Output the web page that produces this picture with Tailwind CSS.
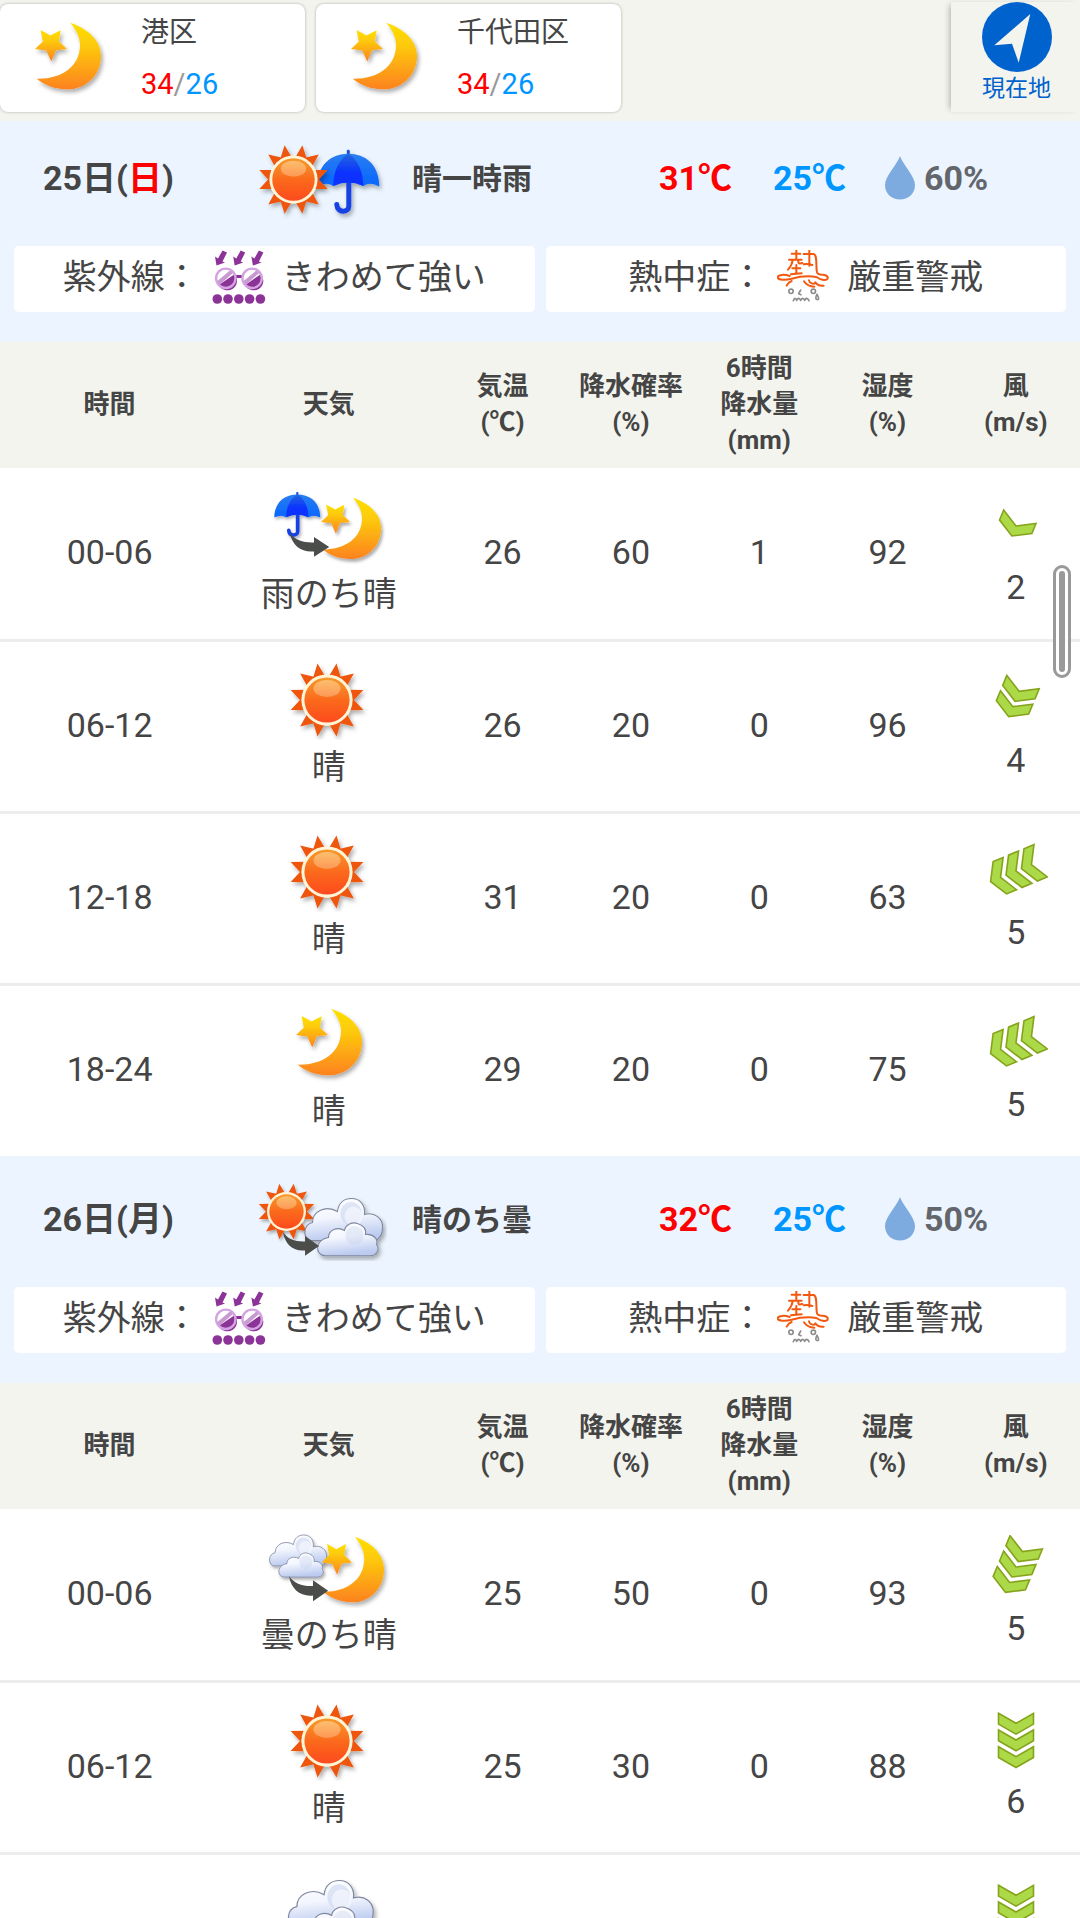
<!DOCTYPE html>
<html lang="ja">
<head>
    <meta charset="UTF-8">
    <meta name="viewport" content="width=device-width, initial-scale=1.0">
    <title>天気予報</title>
    <script src="https://cdn.jsdelivr.net/npm/@tailwindcss/browser@4"></script>
</head>
<body class="relative h-screen overflow-hidden bg-white font-[Roboto,'Noto_Sans_CJK_JP',sans-serif] text-[#454545]">

    <!-- Shared icon shapes -->
    <svg class="absolute w-0 h-0" aria-hidden="true">
        <defs>
            <linearGradient id="gold" x1="0" y1="0" x2="0" y2="1">
                <stop offset="0" stop-color="#fee000" />
                <stop offset="0.35" stop-color="#fdc90b" />
                <stop offset="1" stop-color="#fd8220" />
            </linearGradient>
            <linearGradient id="disc" x1="0" y1="0" x2="0" y2="1">
                <stop offset="0" stop-color="#f59a2c" />
                <stop offset="0.5" stop-color="#fb6a1d" />
                <stop offset="1" stop-color="#fd4a20" />
            </linearGradient>
            <linearGradient id="shine" x1="0" y1="0" x2="0" y2="1">
                <stop offset="0" stop-color="#ffd08a" stop-opacity="0.7" />
                <stop offset="1" stop-color="#ffb27a" stop-opacity="0.6" />
            </linearGradient>
            <linearGradient id="dome" x1="0" y1="0" x2="0" y2="1">
                <stop offset="0" stop-color="#2a7df0" />
                <stop offset="1" stop-color="#0566ff" />
            </linearGradient>
            <linearGradient id="panel" x1="0" y1="0" x2="0" y2="1">
                <stop offset="0" stop-color="#2467dc" />
                <stop offset="0.6" stop-color="#0a32ff" />
                <stop offset="1" stop-color="#0a32ff" />
            </linearGradient>
            <linearGradient id="puff" x1="0" y1="0" x2="0.2" y2="1">
                <stop offset="0" stop-color="#ffffff" />
                <stop offset="0.5" stop-color="#f3f6fe" />
                <stop offset="1" stop-color="#bccbef" />
            </linearGradient>
            <filter id="shadow" x="-20%" y="-20%" width="150%" height="150%">
                <feDropShadow dx="2" dy="3" stdDeviation="2" flood-color="#000" flood-opacity="0.32" />
            </filter>

            <g id="moon" filter="url(#shadow)">
                <path fill="url(#gold)" d="M68 4.7C84 10 99 21 99 38C99 57 84 71.3 66 71.3C53 71.3 42 67 34.7 60.7C57 61.5 78 50 78 27C78 18 73 10 68 4.7Z" />
                <path fill="url(#gold)" d="M38.6 12L48.4 17.4L58.6 12.2L56.9 23.4L65 31L54 32.2L49.3 43.4L44.2 32.4L33 31L40.8 23.4Z" />
            </g>

            <!-- centred on 0,0, rays reach 36.5 -->
            <g id="sun" filter="url(#shadow)">
                <g fill="#ee5510">
                    <path id="rays" d="M-14 -22L-9.5 -36.5L-1.5 -23ZM14 -22L9.5 -36.5L1.5 -23Z" />
                    <use href="#rays" transform="rotate(60)" />
                    <use href="#rays" transform="rotate(120)" />
                    <use href="#rays" transform="rotate(180)" />
                    <use href="#rays" transform="rotate(240)" />
                    <use href="#rays" transform="rotate(300)" />
                </g>
                <circle r="25.6" fill="#fff5d6" />
                <circle r="22.6" fill="url(#disc)" />
                <ellipse cy="-11.5" rx="13.5" ry="8.5" fill="url(#shine)" />
            </g>

            <g id="umbrella" filter="url(#shadow)">
                <path d="M0.500 30V54C0.500 60.500 -11 61 -11.500 52.500" fill="none" stroke="#1742e4" stroke-width="5" stroke-linecap="round" />
                <path d="M-1.500 5V1C-1.500 -0.500 1.500 -0.500 1.500 1V5Z" fill="#1a56d8" />
                <path d="M-31 35C-31 14 -17 3.500 0 3.500C17 3.500 31 14 31 35Q22 30 15 34.500Q0 28 -15 34.500Q-22 30 -31 35Z" fill="url(#dome)" />
                <path d="M0 3.500C-9 9 -15 20 -15 34.500Q0 28 15 34.500C15 20 9 9 0 3.500Z" fill="url(#panel)" />
            </g>

            <g id="cloud" filter="url(#shadow)">
                <g stroke="#8088a0" stroke-width="1.1">
                    <path fill="url(#puff)" d="M6 42C-1 38 0 26 9 24C9 13 22 6 34 13C35 4 41 0 48 0C57 0 62 7 61 16C71 13 80 20 79 30C79 36 76 40 72 42Z" />
                </g>
                <ellipse cx="47.500" cy="15" rx="10.500" ry="11.500" fill="#c9d4ee" opacity="0.55" />
                <ellipse cx="50" cy="18" rx="9" ry="10" fill="#fff" opacity="0.5" />
                <path fill="url(#puff)" stroke="#8088a0" stroke-width="1.1" d="M22 57.300C11 57 11 41 25 39C25 31 34 28 41 32C42 26 49 23 54 25C60 27 63 31 62 36C70 35 75 41 73 46C77 51 73 57.300 66 57.300Z" />
                <ellipse cx="51" cy="37" rx="9" ry="9.500" fill="#c3cfec" opacity="0.35" />
            </g>

            <!-- tip of the arrow at 40,15 -->
            <path id="later" fill="#4b4d4b" d="M0 0C5 8 14 11 24.500 10.500V4.500L40 15.500L24.500 26.500V20.500C12 22 2 14 0 0Z" />

            <path id="gust" fill="#abd947" stroke="#86a31c" stroke-width="1.6" d="M-17.500 -10L0 0L17.500 -10V.8L0 10.800L-17.500 .8Z" />
            <g id="wind1"><use href="#gust" /></g>
            <g id="wind2"><use href="#gust" y="-8.300" /><use href="#gust" y="8.300" /></g>
            <g id="wind3"><use href="#gust" y="-16.700" /><use href="#gust" /><use href="#gust" y="16.700" /></g>

            <g id="uv">
                <g fill="#8b3397">
                    <path id="ray" d="M10.500 0.500L15 2.500L10.500 11.500L13 12.600L4.500 15.600L3 6.500L6 8.500Z" />
                    <use href="#ray" x="18.200" />
                    <use href="#ray" x="36.400" />
                    <circle cx="5.300" cy="49" r="4.800" />
                    <circle cx="16" cy="49" r="4.800" />
                    <circle cx="26.800" cy="49" r="4.800" />
                    <circle cx="37.600" cy="49" r="4.800" />
                    <circle cx="48.400" cy="49" r="4.800" />
                    <rect x="24" y="25" width="6" height="3" />
                </g>
                <g id="lens">
                    <circle cx="13.800" cy="28.300" r="9.600" fill="#fff" />
                    <path d="M22.500 24.200A9.600 9.600 0 1 1 6.800 34.900Z" fill="#8b3397" />
                    <path d="M4.800 31.500L18.500 20L21.500 22.500L7 35.200Z" fill="#c79bd0" />
                    <circle cx="13.800" cy="28.300" r="9.700" fill="none" stroke="#d3a3e2" stroke-width="2.400" />
                </g>
                <use href="#lens" x="26.300" />
            </g>

            <g id="heat" fill="none" stroke-linecap="round" stroke-linejoin="round">
                <g stroke="#f2590f" stroke-width="6">
                    <path d="M62 32H88M76 17V50M54 50H92M65 51C64 62 58 72 51 80M82 51V58C82 62 88 62 94 60" />
                    <path d="M64 76H88M76 66V92M60 94L92 91" />
                    <path d="M98 33H128C140 36 134 72 138 88C141 96 150 95 160 96C176 100 172 112 158 111C148 110 142 106 136 102C110 98 84 101 62 107C44 112 22 112 20 103C21 94 42 94 56 99" />
                    <path d="M115 17V68M98 64C106 62 112 62 124 66" />
                    <path d="M62 114C54 117 50 122 47 128M99 115C106 126 118 131 130 131M114 112C116 122 128 124 133 120M133 118C138 126 148 129 158 128" />
                </g>
                <g stroke="#8c8c8c" stroke-width="5">
                    <circle cx="60" cy="145" r="6.500" />
                    <circle cx="127" cy="145" r="6.500" />
                    <path d="M89 141L83 152L90 155M67 173C70 164 74 164 77 172C81 164 86 164 89 172C93 164 98 164 101 172C105 164 110 164 114 173M138 154C132 164 134 170 139 170C144 170 144 164 138 154" />
                </g>
            </g>
        </defs>
    </svg>

    <!-- Registered places -->
    <header class="flex items-start justify-between bg-[#f3f4ee] pt-1 pb-[9px]">
        <nav class="flex gap-[11px]">
            <a href="#" class="flex items-center w-[305px] h-[108px] bg-white rounded-lg shadow-[0_0_3px_rgba(0,0,0,0.3)]">
                <svg class="ml-7 size-20" viewBox="26 0 80 80"><use href="#moon" /></svg>
                <span class="ml-[33px] text-[28px] leading-[52px]">
                    <span class="block">港区</span>
                    <span class="block text-[29px] leading-[50px]"><span class="text-[#ff0000]">34</span><span class="text-[#999999]">/</span><span class="text-[#0096ff]">26</span></span>
                </span>
            </a>
            <a href="#" class="flex items-center w-[305px] h-[108px] bg-white rounded-lg shadow-[0_0_3px_rgba(0,0,0,0.3)]">
                <svg class="ml-7 size-20" viewBox="26 0 80 80"><use href="#moon" /></svg>
                <span class="ml-[33px] text-[28px] leading-[52px]">
                    <span class="block">千代田区</span>
                    <span class="block text-[29px] leading-[50px]"><span class="text-[#ff0000]">34</span><span class="text-[#999999]">/</span><span class="text-[#0096ff]">26</span></span>
                </span>
            </a>
        </nav>
        <button type="button" class="flex flex-col items-center -mt-0.5 pl-0.5 w-[129px] h-[110px] bg-[#f3f4ee] text-[#0062cc] shadow-[-4px_0_6px_-3px_rgba(0,0,0,0.3)]">
            <svg class="size-[70px] shrink-0" viewBox="0 0 70 70">
                <circle cx="35" cy="35" r="35" fill="#0062cc" />
                <path d="M48.300 12L12.300 43.300L30 41.700L36.700 60.700Z" fill="#f3f4ee" />
            </svg>
            <span class="text-[23px] leading-[34px]">現在地</span>
        </button>
    </header>

    <main>
        <!-- 25日 -->
        <section>
            <div class="bg-[#ecf5ff] px-[14px] pt-[19px] pb-[30px]">
                <div class="grid grid-cols-[212fr_404fr_114fr_112fr_181fr] items-center h-20 pl-[29px] text-[34px] font-bold">
                    <h2 class="pb-1">25日(<span class="text-[#ff0000]">日</span>)</h2>
                    <div class="flex items-center gap-[25px]">
                        <svg class="w-[132px] h-20" viewBox="0 0 132 80">
                            <use href="#umbrella" transform="translate(93.300 10) scale(1 1.040)" />
                            <use href="#sun" transform="translate(38.500 39.500) scale(.94)" />
                        </svg>
                        <span class="pb-1 text-[30px]">晴一時雨</span>
                    </div>
                    <span class="pb-1 text-[#ff0000]">31℃</span>
                    <span class="pb-1 text-[#0096ff]">25℃</span>
                    <span class="flex items-center gap-[9px] pb-1 text-[#63666b]">
                        <svg class="w-[30px] h-11" viewBox="0 0 30 44"><path d="M15 0C18 9 30 20 30 29C30 38 23 43.500 15 43.500C7 43.500 0 38 0 29C0 20 12 9 15 0Z" fill="#7eabdf" /></svg>
                        60%
                    </span>
                </div>
                <div class="grid grid-cols-2 gap-[11px] mt-[26px] text-[34px]">
                    <p class="flex items-center justify-center h-[66px] pb-[3px] bg-white rounded-[5px]">紫外線：<svg class="ml-[13px] mr-4 mb-0.5 size-[54px]" viewBox="0 0 54 54"><use href="#uv" /></svg>きわめて強い</p>
                    <p class="flex items-center justify-center h-[66px] pb-[3px] bg-white rounded-[5px]">熱中症：<svg class="ml-[13px] mr-4 mb-0.5 size-[54px]" viewBox="18 21 162 162"><use href="#heat" /></svg>厳重警戒</p>
                </div>
            </div>
            <table class="w-full table-fixed text-center text-[34px] leading-[51px]">
                <thead>
                    <tr class="h-[126px] bg-[#f3f4ee] text-[26px] leading-9">
                        <th class="w-[20.3%] pb-0.5">時間</th>
                        <th class="w-[20.3%] pb-0.5">天気</th>
                        <th class="pb-0.5">気温<br>(℃)</th>
                        <th class="pb-0.5">降水確率<br>(%)</th>
                        <th class="pb-0.5">6時間<br>降水量<br>(mm)</th>
                        <th class="pb-0.5">湿度<br>(%)</th>
                        <th class="pb-0.5">風<br>(m/s)</th>
                    </tr>
                </thead>
                <tbody>
                    <tr class="h-[172px] border-b-3 border-[#ededed]">
                        <td class="pb-0.5">00-06</td>
                        <td>
                            <svg class="mx-auto mb-0.5 w-[132px] h-20" viewBox="0 0 132 80">
                                <use href="#umbrella" transform="translate(34.300 5) scale(.74 .73)" />
                                <use href="#moon" transform="translate(28 6.500) scale(.91 .92)" />
                                <use href="#later" transform="translate(27 46) scale(.98 .9)" />
                            </svg>
                            雨のち晴
                        </td>
                        <td class="pb-0.5">26</td>
                        <td class="pb-0.5">60</td>
                        <td class="pb-0.5">1</td>
                        <td class="pb-0.5">92</td>
                        <td><svg class="mx-auto mb-1 size-16" viewBox="-32 -32 64 64"><use href="#wind1" transform="rotate(22.500)" /></svg>2</td>
                    </tr>
                    <tr class="h-[172px] border-b-3 border-[#ededed]">
                        <td class="pb-0.5">06-12</td>
                        <td>
                            <svg class="mx-auto mb-0.5 w-[132px] h-20" viewBox="0 0 132 80"><use href="#sun" transform="translate(64 40)" /></svg>
                            晴
                        </td>
                        <td class="pb-0.5">26</td>
                        <td class="pb-0.5">20</td>
                        <td class="pb-0.5">0</td>
                        <td class="pb-0.5">96</td>
                        <td><svg class="mx-auto mb-1 size-16" viewBox="-32 -32 64 64"><use href="#wind2" transform="rotate(22.500)" /></svg>4</td>
                    </tr>
                    <tr class="h-[172px] border-b-3 border-[#ededed]">
                        <td class="pb-0.5">12-18</td>
                        <td>
                            <svg class="mx-auto mb-0.5 w-[132px] h-20" viewBox="0 0 132 80"><use href="#sun" transform="translate(64 40)" /></svg>
                            晴
                        </td>
                        <td class="pb-0.5">31</td>
                        <td class="pb-0.5">20</td>
                        <td class="pb-0.5">0</td>
                        <td class="pb-0.5">63</td>
                        <td><svg class="mx-auto mb-1 size-16" viewBox="-32 -32 64 64"><use href="#wind3" transform="rotate(67.500)" /></svg>5</td>
                    </tr>
                    <tr class="h-[172px]">
                        <td class="pb-0.5">18-24</td>
                        <td>
                            <svg class="mx-auto mb-0.5 w-[132px] h-20" viewBox="0 0 132 80"><use href="#moon" /></svg>
                            晴
                        </td>
                        <td class="pb-0.5">29</td>
                        <td class="pb-0.5">20</td>
                        <td class="pb-0.5">0</td>
                        <td class="pb-0.5">75</td>
                        <td><svg class="mx-auto mb-1 size-16" viewBox="-32 -32 64 64"><use href="#wind3" transform="rotate(67.500)" /></svg>5</td>
                    </tr>
                </tbody>
            </table>
        </section>

        <!-- 26日 -->
        <section>
            <div class="bg-[#ecf5ff] px-[14px] pt-[25px] pb-[30px]">
                <div class="grid grid-cols-[212fr_404fr_114fr_112fr_181fr] items-center h-20 pl-[29px] text-[34px] font-bold">
                    <h2 class="pb-1">26日(月)</h2>
                    <div class="flex items-center gap-[25px]">
                        <svg class="w-[132px] h-20" viewBox="0 0 132 80">
                            <use href="#sun" transform="translate(31.500 30.500) scale(.76)" />
                            <use href="#cloud" transform="translate(48.500 17.500)" />
                            <use href="#later" transform="translate(28 51) scale(.9 .9)" />
                        </svg>
                        <span class="pb-1 text-[30px]">晴のち曇</span>
                    </div>
                    <span class="pb-1 text-[#ff0000]">32℃</span>
                    <span class="pb-1 text-[#0096ff]">25℃</span>
                    <span class="flex items-center gap-[9px] pb-1 text-[#63666b]">
                        <svg class="w-[30px] h-11" viewBox="0 0 30 44"><path d="M15 0C18 9 30 20 30 29C30 38 23 43.500 15 43.500C7 43.500 0 38 0 29C0 20 12 9 15 0Z" fill="#7eabdf" /></svg>
                        50%
                    </span>
                </div>
                <div class="grid grid-cols-2 gap-[11px] mt-[26px] text-[34px]">
                    <p class="flex items-center justify-center h-[66px] pb-[3px] bg-white rounded-[5px]">紫外線：<svg class="ml-[13px] mr-4 mb-0.5 size-[54px]" viewBox="0 0 54 54"><use href="#uv" /></svg>きわめて強い</p>
                    <p class="flex items-center justify-center h-[66px] pb-[3px] bg-white rounded-[5px]">熱中症：<svg class="ml-[13px] mr-4 mb-0.5 size-[54px]" viewBox="18 21 162 162"><use href="#heat" /></svg>厳重警戒</p>
                </div>
            </div>
            <table class="w-full table-fixed text-center text-[34px] leading-[51px]">
                <thead>
                    <tr class="h-[126px] bg-[#f3f4ee] text-[26px] leading-9">
                        <th class="w-[20.3%] pb-0.5">時間</th>
                        <th class="w-[20.3%] pb-0.5">天気</th>
                        <th class="pb-0.5">気温<br>(℃)</th>
                        <th class="pb-0.5">降水確率<br>(%)</th>
                        <th class="pb-0.5">6時間<br>降水量<br>(mm)</th>
                        <th class="pb-0.5">湿度<br>(%)</th>
                        <th class="pb-0.5">風<br>(m/s)</th>
                    </tr>
                </thead>
                <tbody>
                    <tr class="h-[172px] border-b-3 border-[#ededed]">
                        <td class="pb-0.5">00-06</td>
                        <td>
                            <svg class="mx-auto mb-0.5 w-[132px] h-20" viewBox="0 0 132 80">
                                <use href="#cloud" transform="translate(5.500 7) scale(.735)" />
                                <use href="#moon" transform="translate(27.500 4) scale(.945 .985)" />
                                <use href="#later" transform="translate(26 48) scale(.98 .95)" />
                            </svg>
                            曇のち晴
                        </td>
                        <td class="pb-0.5">25</td>
                        <td class="pb-0.5">50</td>
                        <td class="pb-0.5">0</td>
                        <td class="pb-0.5">93</td>
                        <td><svg class="mx-auto mb-1 size-16" viewBox="-32 -32 64 64"><use href="#wind3" transform="rotate(22.500)" /></svg>5</td>
                    </tr>
                    <tr class="h-[172px] border-b-3 border-[#ededed]">
                        <td class="pb-0.5">06-12</td>
                        <td>
                            <svg class="mx-auto mb-0.5 w-[132px] h-20" viewBox="0 0 132 80"><use href="#sun" transform="translate(64 40)" /></svg>
                            晴
                        </td>
                        <td class="pb-0.5">25</td>
                        <td class="pb-0.5">30</td>
                        <td class="pb-0.5">0</td>
                        <td class="pb-0.5">88</td>
                        <td><svg class="mx-auto mb-1 size-16" viewBox="-32 -32 64 64"><use href="#wind3" /></svg>6</td>
                    </tr>
                    <tr class="h-[172px] border-b-3 border-[#ededed]">
                        <td></td>
                        <td>
                            <svg class="mx-auto mb-[53px] w-[132px] h-20" viewBox="0 0 132 80"><use href="#cloud" transform="translate(24 7.500) scale(1.090)" /></svg>
                        </td>
                        <td></td>
                        <td></td>
                        <td></td>
                        <td></td>
                        <td><svg class="mx-auto mb-[55px] size-16" viewBox="-32 -32 64 64"><use href="#wind3" /></svg></td>
                    </tr>
                </tbody>
            </table>
        </section>
    </main>

    <!-- Scroll thumb -->
    <div class="absolute right-[9px] top-[565px] w-[18px] h-[113px] p-[3px] rounded-full border-3 border-[#999999] bg-white/90">
        <div class="h-full rounded-full bg-[#999999]"></div>
    </div>
</body>
</html>
